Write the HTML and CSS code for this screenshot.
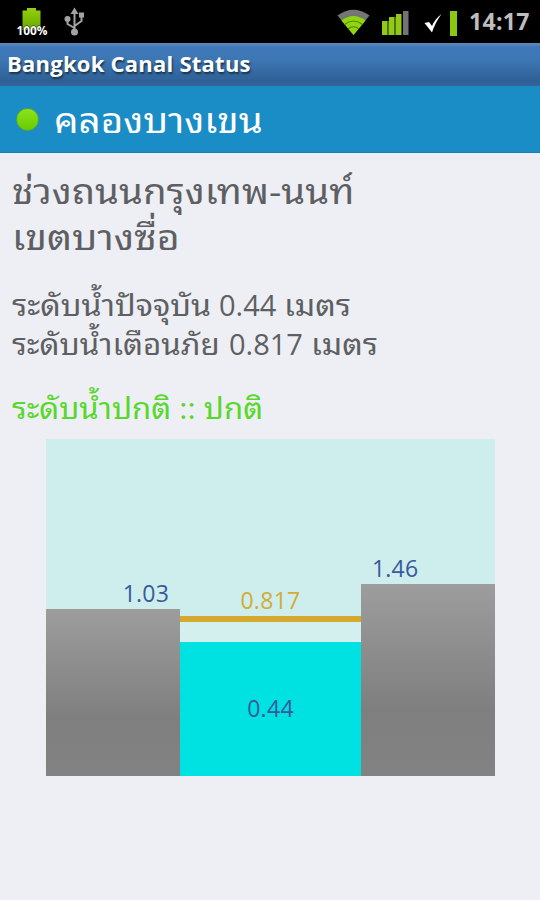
FILE: index.html
```
<!DOCTYPE html>
<html lang="th">
<head>
<meta charset="utf-8">
<title>Bangkok Canal Status</title>
<link rel="stylesheet" href="styles.css">
</head>
<body>
<div class="statusbar">
  <svg class="battery" width="32" height="34" viewBox="0 0 32 34">
    <defs><linearGradient id="bat" x1="0" y1="0" x2="0" y2="1"><stop offset="0" stop-color="#94d00a"/><stop offset="1" stop-color="#67a800"/></linearGradient></defs>
    <path d="M6.500 4.500H11V2H20V4.500H24.500V24H6.500Z" fill="url(#bat)"/>
    <text x="0.500" y="29" textLength="31" lengthAdjust="spacingAndGlyphs">100%</text>
  </svg>
  <svg class="usb" width="22" height="30" viewBox="0 0 22 30">
    <g fill="none" stroke="#a3a3a3" stroke-width="2">
      <path d="M10.500 5V24M10.500 21L3.500 17V11M10.500 19L17.500 14V9"/>
    </g>
    <g fill="#a3a3a3"><path d="M10.500 0.500L14.500 7H6.500Z"/><circle cx="3.500" cy="12" r="3"/><path d="M15 5.500h5v5h-5z"/><circle cx="10.500" cy="25" r="3.500"/></g>
  </svg>
  <svg class="wifi" width="34" height="27" viewBox="0 0 34 27">
    <path d="M0.500 6.500Q16.500 -5 32.500 6.500L16.500 26Z" fill="#757575"/>
    <path d="M4.500 11.500Q16.500 2.500 28.500 11.500L16.500 26Z" fill="#91d60c"/>
    <path d="M7.500 15.500Q16.500 8.500 25.500 15.500M11 20Q16.500 15.500 22 20" fill="none" stroke="#4f8100" stroke-width="1.200"/>
  </svg>
  <svg class="signal" width="28" height="26" viewBox="0 0 28 26">
    <path d="M0 11h5.500v14H0zM7 7h5.500v18H7zM14 4h5.500v21H14z" fill="#91c916"/>
    <path d="M5.500 11h1.500v14h-1.500zM12.500 7h1.500v18h-1.500z" fill="#4f7800"/>
    <path d="M21 1h5.500v24H21z" fill="#737373"/>
  </svg>
  <svg class="check" width="18" height="20" viewBox="0 0 18 20"><path d="M0.500 9L5 8L8 12Q11 5 17.500 0Q11 9 8 18.500Z" fill="#fff"/></svg>
  <span class="level"></span>
  <span class="clock">14:17</span>
</div>
<div class="titlebar">Bangkok Canal Status</div>
<header class="canal"><span class="dot"></span><span class="canal-name">คลองบางเขน</span></header>
<main>
  <p class="place first"><span>ช่วงถนนกรุงเทพ-นนท์</span></p>
  <p class="place second"><span>เขตบางซื่อ</span></p>
  <div class="levels">
    <p class="now"><span class="label">ระดับน้ำปัจจุบัน</span><b>0.44</b><span class="unit">เมตร</span></p>
    <p class="warn"><span class="label">ระดับน้ำเตือนภัย</span><b>0.817</b><span class="unit">เมตร</span></p>
  </div>
  <p class="state"><span>ระดับน้ำปกติ :: ปกติ</span></p>
  <div class="chart">
    <div class="side left"><span>1.03</span><div class="bank"></div></div>
    <div class="middle"><span class="limit">0.817</span><div class="gap"></div><div class="water">0.44</div></div>
    <div class="side right"><span>1.46</span><div class="bank"></div></div>
  </div>
</main>
</body>
</html>
```
FILE: styles.css
```
* { box-sizing: border-box; }
body { margin: 0; width: 540px; height: 900px; overflow: hidden; background: #eeeff4; font-family: "Open Sans", "Noto Sans Thai Looped", "Noto Looped Thai", "Loma", "Droid Sans Thai", "Waree", "Noto Serif Thai", "Noto Sans Thai", sans-serif; }
p { margin: 0; white-space: nowrap; }
svg { display: block; flex: none; }
.statusbar { height: 43px; background: #000; display: flex; align-items: flex-start; }
.battery { margin: 6px 0 0 16px; }
.battery text { font: bold 12px "Open Sans", sans-serif; fill: #fff; stroke: #000; stroke-width: 1px; paint-order: stroke; }
.usb { margin: 7px 0 0 16px; }
.wifi { margin: 9px 0 0 251px; }
.signal { margin: 10px 0 0 11px; }
.check { margin: 14px 0 0 14px; }
.level { width: 7px; height: 25px; margin: 11px 0 0 8px; background: #8ac90d; }
.clock { margin: 5px 0 0 12px; font: bold 23px/33px "Open Sans", sans-serif; letter-spacing: 0.3px; color: #bebebe; white-space: nowrap; }
.titlebar { height: 43px; padding-left: 7px; background: linear-gradient(#6289b8 0, #4079b9 4px, #3d76b3 40%, #2d6095 90%, #3a6498); color: #fff; font: bold 22px/41px "Open Sans", sans-serif; letter-spacing: 0.24px; text-shadow: 1px 2px 2px #17334d; }
.canal { height: 67px; display: flex; align-items: center; padding-left: 16px; background: #1b8dc6; border-bottom: 1px solid #1680b4; color: #fff; }
.dot { width: 23px; height: 23px; border-radius: 50%; background: linear-gradient(#8be31c, #69cb00); border: 1px solid #58a633; }
.canal-name { margin-left: 15px; font-size: 35px; line-height: 67px; transform: scaleX(1.102); transform-origin: left; }
main { padding: 15px 0 0 12px; color: #5e5f63; }
p span { display: inline-block; transform-origin: left; }
.place { height: 46px; font-size: 35px; line-height: 46px; }
.first span { transform: scaleX(1.097); }
.second span { transform: scaleX(1.12); }
.levels { margin-top: 25px; font-size: 29px; }
.levels p { display: flex; height: 39px; line-height: 39px; }
.now .label { width: 207px; transform: scaleX(1.108); }
.warn .label { width: 217px; transform: scaleX(1.08); }
b { font-weight: 400; }
.unit { margin-left: 8px; transform: scaleX(1.11); }
.state { margin-top: 24px; height: 42px; font-size: 29px; line-height: 42px; color: #57d82b; }
.state span { transform: scaleX(1.075); }
.chart { width: 449px; height: 337px; margin: 10px 0 0 34px; display: flex; background: #cdeeed; color: #39599b; font: 23px/30px "Open Sans", sans-serif; }
.side { width: 134px; display: flex; flex-direction: column; justify-content: flex-end; }
.side span { margin: 0 11px 1px; letter-spacing: 0.2px; }
.left span { text-align: right; }
.bank { background: linear-gradient(#9d9d9d, #7f7f7f 65%, #828282); }
.left .bank { height: 167px; }
.right .bank { height: 192px; }
.middle { width: 181px; display: flex; flex-direction: column; justify-content: flex-end; text-align: center; letter-spacing: 0.3px; }
.limit { color: #d3ab36; border-bottom: 6px solid #d5a82e; height: 37px; }
.gap { height: 20px; background: #d3f0ee; }
.water { height: 134px; line-height: 132px; background: #00e1e2; }
```
